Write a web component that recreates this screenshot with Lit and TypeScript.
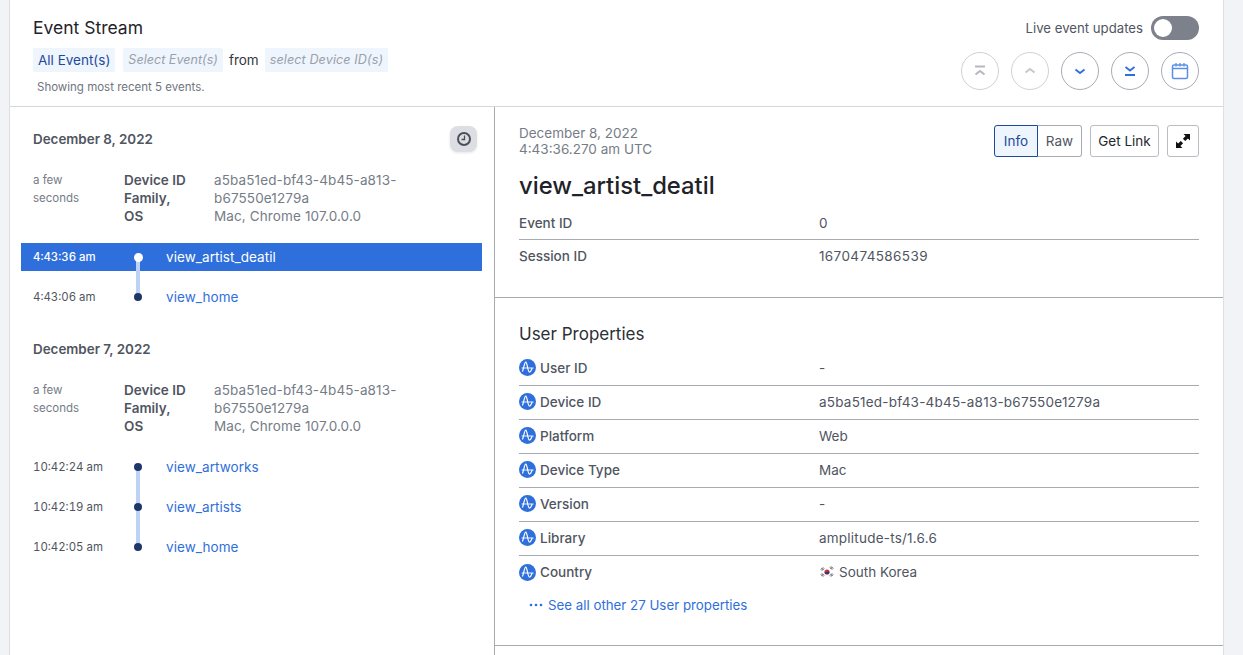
import { LitElement, html, css, svg } from "lit";
import { customElement } from "lit/decorators.js";

const ampIcon = html`<svg class="amp" viewBox="0 0 17 17" width="17" height="17"><circle cx="8.5" cy="8.5" r="8.5" fill="#2f6fdb"/><path d="M2.600 9H14.600" fill="none" stroke="#fff" stroke-width="0.900"/><path d="M3.400 12.600C4.800 9.500 5.400 3.200 6.800 3.200 8.200 3.200 8.700 13.200 10.500 13.200 11.700 13.200 12.300 10.800 13.200 9" fill="none" stroke="#fff" stroke-width="1.200"/></svg>`;

const flag = html`<svg class="flag" viewBox="0 0 16 12" width="16" height="12"><rect width="16" height="12" fill="#fff"/><circle cx="8" cy="6" r="2.600" fill="#cd2e3a"/><path d="M5.500 6.200a2.600 2.600 0 0 0 5 .2c-.6-1-1.600-1-2.400-.4-.8.6-1.900.9-2.600.2z" fill="#0f3f8c"/><path d="M2 3.500l2-2M3 4.500l2-2M11 1.500l2 2M12 .5l2 2M2 8.500l2 2M3 7.500l2 2M13 7.500l-2 2M14 8.500l-2 2" stroke="#222" stroke-width="1"/></svg>`;

@customElement("app-root")
export class AppRoot extends LitElement {
  static styles = css`
    :host { display: block; height: 655px; overflow: hidden; background: #f1f3f6; font-family: Inter, "Noto Sans", sans-serif; color: #50555f; font-size: 13.500px; }
    * { box-sizing: border-box; }
    .card { margin: 0 19px 0 9px; width: 1215px; height: 655px; background: #fff; border-left: 1px solid #dcdfe4; border-right: 1px solid #dcdfe4; display: flex; flex-direction: column; }
    .top { height: 107px; flex: none; border-bottom: 1px solid #d5d7dc; padding: 0 24px 0 23px; display: flex; justify-content: space-between; }
    .top-l { display: flex; flex-direction: column; }
    h1 { margin: 17px 0 0; font-size: 17.500px; line-height: 22px; font-weight: 400; color: #1f2329; }
    .filters { display: flex; align-items: center; height: 24px; margin-top: 9px; }
    .chip { height: 24px; line-height: 24px; padding: 0 5px; background: #eef5fd; border-radius: 2px; font-size: 13.500px; }
    .chip.on { color: #1f4a9c; margin-right: 8px; }
    .chip.ph { color: #9aa0ab; font-style: italic; font-size: 12.600px; }
    .chip.dev { letter-spacing: .1px; }
    .from { margin: 0 6px; color: #32363d; }
    .hint { margin: 8px 0 0 4px; font-size: 11.500px; line-height: 14px; color: #6f7580; }
    .top-r { display: flex; flex-direction: column; align-items: flex-end; }
    .live { display: flex; align-items: center; gap: 8px; margin-top: 16px; height: 24px; font-size: 13.200px; }
    .toggle { width: 48px; height: 24px; border-radius: 12px; background: #7c818c; padding: 3px; }
    .toggle i { display: block; width: 18px; height: 18px; border-radius: 50%; background: #fff; }
    .rounds { display: flex; gap: 12px; margin-top: 12px; }
    .round { width: 38px; height: 38px; border-radius: 50%; border: 1px solid #a9acb5; display: flex; align-items: center; justify-content: center; }
    .round.off { border-color: #cfd1d6; }
    .body { flex: 1; display: flex; min-height: 0; }
    .left { width: 485px; flex: none; border-right: 1px solid #a9abb3; padding: 19px 12px 0 11px; }
    .day { display: flex; align-items: center; justify-content: space-between; height: 26px; padding: 0 5px 0 12px; font-weight: 600; font-size: 13.400px; color: #50555f; }
    .day + .meta { margin-top: 19px; }
    .clock { width: 27px; height: 26px; border-radius: 8px; background: #dcdee3; display: flex; align-items: center; justify-content: center; box-shadow: 0 1px 3px rgba(0,0,0,.1); }
    .meta { display: grid; grid-template-columns: 91px 90px 190px; padding-left: 12px; line-height: 18px; }
    .ago { font-size: 11.500px; width: 60px; color: #767c87; }
    .meta b { font-weight: 600; width: 64px; }
    .meta span.v { color: #767c87; letter-spacing: .12px; }
    .events { margin-top: 18px; }
    .ev { height: 40px; display: flex; align-items: center; padding-left: 12px; position: relative; }
    .ev.sel { height: 28px; margin-bottom: 6px; background: #2f6fdb; color: #fff; margin-top: 1px; }
    .ev .t { width: 133px; font-size: 11.400px; font-variant-numeric: tabular-nums; }
    .ev.sel .t { font-weight: 500; }
    .ev .n { color: #2f6fdb; font-size: 13.500px; letter-spacing: .06px; }
    .ev.sel .n { color: #fff; }
    .node { position: absolute; left: 113px; top: 50%; width: 8px; height: 8px; margin-top: -4px; border-radius: 50%; background: #1f3768; z-index: 2; }
    .ev.sel .node { background: #fff; width: 9px; height: 9px; margin-top: -4.500px; }
    .line { position: absolute; left: 115px; width: 4px; top: 50%; height: 40px; background: #bcd3f5; z-index: 1; }
    .gap { height: 19px; }
    .events2 { margin-top: 12px; }
    .right { flex: 1; min-width: 0; display: flex; flex-direction: column; }
    .sec1 { height: 191px; flex: none; border-bottom: 1px solid #a9abb3; padding: 18px 24px 0; }
    .headrow { display: flex; justify-content: space-between; }
    .stamp { line-height: 16px; color: #767c87; }
    .btns { display: flex; }
    .btn { height: 32px; border: 1px solid #b9bcc3; border-radius: 3px; display: flex; align-items: center; justify-content: center; color: #24272d; background: #fff; }
    .info { width: 44px; border-radius: 3px 0 0 3px; background: #eef5fd; border-color: #1f4a9c; color: #1f4a9c; }
    .raw { width: 44px; border-radius: 0 3px 3px 0; color: #50555f; border-color: #a9abb3; border-left: none; }
    .link { width: 69px; margin-left: 8px; }
    .exp { width: 32px; margin-left: 8px; }
    h2 { margin: 14px 0 0; font-size: 23.800px; line-height: 30px; font-weight: 500; color: #1f2329; }
    .row { display: flex; align-items: center; height: 34px; border-bottom: 1px solid #a9abb3; }
    .row:last-child { border-bottom: none; }
    .sec1 .rows { margin-top: 5px; }
    .sec1 .row:last-child { padding-bottom: 2px; }
    .sec2 .row { padding-bottom: 2px; }
    .row .k { width: 300px; flex: none; font-weight: 500; display: flex; align-items: center; gap: 4px; }
    .row .val { display: flex; align-items: center; gap: 4px; color: #50555f; }
    .row .val.id { letter-spacing: .22px; }
    .row .val.num { letter-spacing: .38px; }
    .sec2 { height: 348px; flex: none; border-bottom: 1px solid #a9abb3; padding: 24px 24px 0; }
    h3 { margin: 0; font-size: 17px; line-height: 24px; font-weight: 400; color: #2b2f36; }
    .sec2 .rows { margin-top: 6px; }
    .more { display: flex; align-items: center; gap: 5px; padding-left: 10px; height: 30px; color: #2f6fdb; font-size: 13.300px; }
    .amp, .flag { flex: none; }
  `;

  private icon(d: string, color: string, w = 2) {
    return html`<svg width="16" height="16" viewBox="0 0 16 16" fill="none" stroke=${color} stroke-width=${w}>${svg`<path d=${d}/>`}</svg>`;
  }

  private events(list: string[][], sel = -1) {
    return list.map((e, i) => html`<div class="ev ${i === sel ? "sel" : ""}"><span class="t">${e[0]}</span>
      <span class="node"></span>${i < list.length - 1 ? html`<span class="line"></span>` : ""}
      <span class="n">${e[1]}</span></div>`);
  }

  private meta() {
    return html`<div class="meta"><span class="ago">a few seconds</span><b>Device ID Family, OS</b>
      <span class="v">a5ba51ed-bf43-4b45-a813-b67550e1279a<br>Mac, Chrome 107.0.0.0</span></div>`;
  }

  private row(k: string, v: unknown, amp = true, cls = "") {
    return html`<div class="row"><span class="k">${amp ? ampIcon : ""}${k}</span><span class="val ${cls}">${v}</span></div>`;
  }

  render() {
    return html`<div class="card">
      <div class="top">
        <div class="top-l">
          <h1>Event Stream</h1>
          <div class="filters"><span class="chip on">All Event(s)</span><span class="chip ph">Select Event(s)</span><span class="from">from</span><span class="chip ph dev">select Device ID(s)</span></div>
          <div class="hint">Showing most recent 5 events.</div>
        </div>
        <div class="top-r">
          <div class="live">Live event updates<div class="toggle"><i></i></div></div>
          <div class="rounds">
            <div class="round off">${this.icon("M3 3.500H13M3.500 11.500L8 8L12.500 11.500", "#b4b7be")}</div>
            <div class="round off">${this.icon("M3.500 9.500L8 6L12.500 9.500", "#c6c8cd")}</div>
            <div class="round">${this.icon("M3.500 6.500L8 10L12.500 6.500", "#2f6fdb", 1.8)}</div>
            <div class="round">${this.icon("M3.500 4L8 7.500L12.500 4M3 12H13", "#2f6fdb", 1.8)}</div>
            <div class="round"><svg width="18" height="18" viewBox="0 0 18 18" fill="none" stroke="#5b8fe6" stroke-width="1.500"><rect x="1.500" y="3" width="15" height="13.500" rx="1.500"/><path d="M1.500 6.500H16.500M5 1V4.500M9 1V4.500M13 1V4.500" stroke-width="1.300"/></svg></div>
          </div>
        </div>
      </div>
      <div class="body">
        <div class="left">
          <div class="day">December 8, 2022<span class="clock"><svg width="16" height="16" viewBox="0 0 16 16" fill="none" stroke="#4a4f59" stroke-width="2"><circle cx="8" cy="8" r="6"/><path d="M8.500 4.500V8.500H5.500" stroke-width="1.300"/></svg></span></div>
          ${this.meta()}
          <div class="events">${this.events([["4:43:36 am", "view_artist_deatil"], ["4:43:06 am", "view_home"]], 0)}</div>
          <div class="gap"></div>
          <div class="day">December 7, 2022</div>
          ${this.meta()}
          <div class="events events2">${this.events([["10:42:24 am", "view_artworks"], ["10:42:19 am", "view_artists"], ["10:42:05 am", "view_home"]])}</div>
        </div>
        <div class="right">
          <div class="sec1">
            <div class="headrow">
              <div class="stamp">December 8, 2022<br>4:43:36.270 am UTC</div>
              <div class="btns"><div class="btn info">Info</div><div class="btn raw">Raw</div><div class="btn link">Get Link</div>
                <div class="btn exp"><svg width="16" height="16" viewBox="0 0 16 16" fill="#111"><path d="M8.500 1H15V7.500L12.900 5.400L10.200 8.100L7.900 5.800L10.600 3.100Z"/><path d="M7.500 15H1V8.500L3.100 10.600L5.800 7.900L8.100 10.200L5.400 12.900Z"/></svg></div></div>
            </div>
            <h2>view_artist_deatil</h2>
            <div class="rows">${this.row("Event ID", "0", false)}${this.row("Session ID", "1670474586539", false, "num")}</div>
          </div>
          <div class="sec2">
            <h3>User Properties</h3>
            <div class="rows">
              ${this.row("User ID", "-")}${this.row("Device ID", "a5ba51ed-bf43-4b45-a813-b67550e1279a", true, "id")}${this.row("Platform", "Web")}${this.row("Device Type", "Mac")}${this.row("Version", "-")}${this.row("Library", "amplitude-ts/1.6.6", true, "id")}${this.row("Country", html`${flag}South Korea`)}
            </div>
            <div class="more"><svg width="14" height="4" viewBox="0 0 14 4" fill="#2f6fdb"><circle cx="2" cy="2" r="1.300"/><circle cx="7" cy="2" r="1.300"/><circle cx="12" cy="2" r="1.300"/></svg>See all other 27 User properties</div>
          </div>
        </div>
      </div>
    </div>`;
  }
}
